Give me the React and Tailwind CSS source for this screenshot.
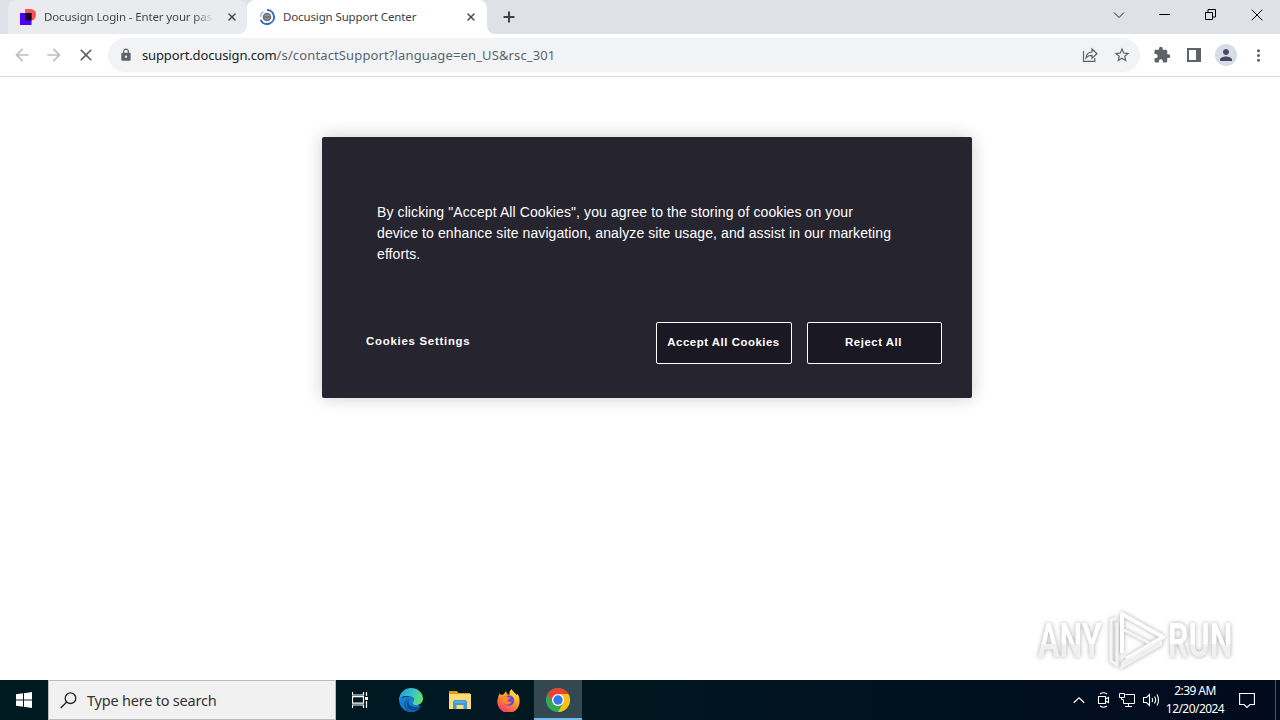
import { Plus, X } from "lucide-react";
import {
  MdArrowBack,
  MdArrowForward,
  MdClose,
  MdExtension,
  MdLock,
  MdMoreVert,
  MdPerson,
  MdStarBorder,
} from "react-icons/md";

function DocusignIcon() {
  return (
    <svg width="16" height="16" viewBox="0 0 16 16">
      <path d="M5 0h5.500A5.500 5.500 0 0 1 16 5.500c0 3.300-2 5.900-4.600 6.200H5z" fill="#ff5252" />
      <path d="M0 4h11.500v12H0z" fill="#4c00ff" />
      <path d="M5 4h6.500v7.500H5z" fill="#130020" />
    </svg>
  );
}

function LoadingIcon() {
  return (
    <svg width="16" height="16" viewBox="0 0 16 16" fill="none">
      <circle cx="8" cy="8" r="4.300" fill="#716d73" />
      <path d="M5.500 7.200 8 5.500l3 1.700M6 9l2.400 1.400 2-1.300" stroke="#c4bfc2" strokeWidth="0.800" />
      <path d="M8 1a7 7 0 1 1-6.400 9.800" stroke="#2c6bd1" strokeWidth="2" />
      <path d="M1.400 8a6.600 6.600 0 0 1 3-5.400" stroke="#9bb9e8" strokeWidth="1.300" />
    </svg>
  );
}

function TabStrip() {
  return (
    <div className="flex h-[34px] bg-[#dee1e6] pl-2">
      <div className="flex w-[239px] items-center rounded-t-lg bg-[#e9ebee] pl-3">
        <DocusignIcon />
        <span className="ml-2 w-[170px] bg-linear-to-r from-[#3c4043] from-88% to-transparent bg-clip-text text-[11.5px] tracking-[-0.13px] whitespace-nowrap text-transparent">
          Docusign Login - Enter your pas
        </span>
        <X className="ml-[12px]" size={12} strokeWidth={3} color="#45494d" />
      </div>
      <div className="relative flex w-[240px] items-center rounded-t-lg bg-white pl-3">
        <svg className="absolute bottom-0 -left-2" width="8" height="8">
          <path d="M8 0v8H0a8 8 0 0 0 8-8" fill="#fff" />
        </svg>
        <svg className="absolute -right-2 bottom-0" width="8" height="8">
          <path d="M0 0v8h8a8 8 0 0 1-8-8" fill="#fff" />
        </svg>
        <LoadingIcon />
        <span className="ml-2 w-[170px] text-[11.5px] tracking-[-0.13px] whitespace-nowrap text-[#3c4043]">
          Docusign Support Center
        </span>
        <X className="ml-[12px]" size={12} strokeWidth={3} color="#45494d" />
      </div>
      <Plus className="mt-[9px] ml-[14px]" size={16} strokeWidth={3} color="#3c4043" />
      <div className="ml-auto flex h-[29px] items-center">
        <svg className="mr-[34px]" width="12" height="12" fill="none" stroke="#222">
          <path d="m1 3.500 5 5 5-5" />
        </svg>
        <svg className="mr-[35px]" width="11" height="11" stroke="#000">
          <path d="M0 5.500h11" />
        </svg>
        <svg className="mr-[35px]" width="11" height="11" fill="none" stroke="#000">
          <path d="M.5 3.500h7v7h-7zM3 3V.5h7.500v7.500H8" />
        </svg>
        <svg className="mr-[17px]" width="12" height="12" stroke="#000">
          <path d="m.7.7 10.600 10.600m0-10.600L.7 11.300" />
        </svg>
      </div>
    </div>
  );
}

function Toolbar() {
  return (
    <div className="flex h-[43px] items-center border-b border-[#dadce0] bg-white pl-3 text-[#5f6368]">
      <MdArrowBack className="text-[#bcbec1]" size={20} />
      <MdArrowForward className="ml-3 text-[#bcbec1]" size={20} />
      <MdClose className="ml-3" size={20} />
      <div className="ml-3 flex h-[34px] w-[1032px] items-center rounded-full bg-[#f1f3f4] pl-[11px]">
        <MdLock size={14} />
        <span className="ml-[9px] pt-[2px] text-[13px] tracking-[0.13px] whitespace-nowrap">
          <span className="tracking-[-0.13px] text-[#202124]">support.docusign.com</span>
          /s/contactSupport?language=en_US&amp;rsc_301
        </span>
        <svg className="ml-auto" width="16" height="16" viewBox="0 0 16 16" fill="none" stroke="#5f6368" strokeWidth="1.200">
          <path d="M1.500 4v10.400h11.300V11M4 11c.4-4 2.500-5.800 6-6V2l5 4.700-5 4.500V8.300C7.400 8.200 5.500 9 4 11z" />
        </svg>
        <MdStarBorder className="mr-[9px] ml-[15px]" size={18} />
      </div>
      <MdExtension className="ml-[13px]" size={18} />
      <svg className="ml-4" width="14" height="14">
        <path d="M0 0h14v14H0zM2 2v10h7V2z" fill="#5f6368" fillRule="evenodd" />
      </svg>
      <div className="ml-[14px] flex size-[22px] items-center justify-center rounded-full bg-[#d9dbe5]">
        <MdPerson size={18} color="#454a62" />
      </div>
      <MdMoreVert className="ml-[12px]" size={19} />
    </div>
  );
}

function CookieDialog() {
  return (
    <div className="mt-[60px] ml-[322px] h-[261px] w-[650px] rounded-[2px] bg-[#26242e] pt-[65px] text-white shadow-[0_0_18px_rgba(0,0,0,0.2)]">
      <p className="ml-[55px] text-[14px] leading-[21px] tracking-[0.1px] whitespace-nowrap">
        By clicking "Accept All Cookies", you agree to the storing of cookies on your
        <br />
        device to enhance site navigation, analyze site usage, and assist in our marketing
        <br />
        efforts.
      </p>
      <div className="mt-[57px] flex pr-[30px] pl-[44px] text-[11.4px] font-bold tracking-[0.54px]">
        <button className="h-[40px] tracking-[0.75px] whitespace-nowrap">Cookies Settings</button>
        <button className="ml-auto h-[42px] w-[136px] rounded-[2px] border border-white bg-[#1a1822] pr-[1px] whitespace-nowrap">
          Accept All Cookies
        </button>
        <button className="ml-[15px] h-[42px] w-[135px] rounded-[2px] border border-white bg-[#1a1822] pr-[2px]">
          Reject All
        </button>
      </div>
    </div>
  );
}

function Watermark() {
  const word =
    "inline-block origin-left bg-linear-to-b from-white from-55% to-[#f0f0f0] to-56% bg-clip-text font-['Roboto'] text-[48px] leading-[60px] font-bold text-transparent";
  return (
    <div className="absolute top-[610px] left-[1038px] flex h-[62px] w-[200px] items-center">
      <div className="w-[67px] drop-shadow-[0_0_2px_#aaa]">
        <span className={`${word} scale-x-[0.67]`}>ANY</span>
      </div>
      <svg
        className="shrink-0 drop-shadow-[0_0_2px_#aaa]"
        width="62"
        height="62"
        viewBox="0 0 62 62"
        fill="none"
        stroke="#fff"
        strokeWidth="4"
        strokeLinejoin="round"
      >
        <path d="M17 43V4l41 23-37 22" />
        <path d="M11 8 6 10v41l6 4V13m5 6 35 18" stroke="#f5f5f5" strokeWidth="3" />
        <path d="m16 58 40-23v-5L18 52z" fill="#eee" stroke="#f3f3f3" strokeWidth="2" />
      </svg>
      <div className="ml-[1px] w-[66px] drop-shadow-[0_0_2px_#aaa]">
        <span className={`${word} scale-x-[0.67]`}>RUN</span>
      </div>
    </div>
  );
}

function EdgeIcon() {
  return (
    <svg width="24" height="24" viewBox="0 0 24 24">
      <defs>
        <linearGradient id="edgeTop" x1="0" y1="0.3" x2="1" y2="0.6">
          <stop offset="0" stopColor="#249fdc" />
          <stop offset="0.5" stopColor="#36c5c5" />
          <stop offset="1" stopColor="#67df6a" />
        </linearGradient>
      </defs>
      <path d="M.1 10C-.5 18 4.500 24 12 24c4 0 7.500-1.800 9.500-4.500L12 8z" fill="#1380d0" />
      <path d="M.1 11C1 4 6 0 12 0c7 0 12 5 12 10.500 0 4-3 6.500-6.500 6.500-3 0-4.500-1.400-3.500-2.600 2.500-3-.5-6.400-4.500-6.400C5 8 1.600 8.500.1 12z" fill="url(#edgeTop)" />
      <path d="M10.500 10c-4 1.500-4.500 6.500-2 9.800 2.800 3.700 7.500 4 10.500 2A12 12 0 0 1 9 23.500C5.500 21.500 4.500 18 5.500 14.500 6.300 12 8 10.500 10.500 10z" fill="#125da8" />
      <path d="M11 10.500c-2.500 2-1.700 6 1.300 7.600 3 1.600 6.700 1.200 9.500-.6.500-.3.800.2.500.7-1.800 3-5 4.400-8 4.200-4-.3-6.800-3.200-6.500-6.900.2-2.400 1.300-4.200 3.200-5z" fill="#0b4a90" />
    </svg>
  );
}

function FolderIcon() {
  return (
    <svg width="22" height="20" viewBox="0 0 22 20">
      <path d="M0 1h8l1.500 2H21v4H0z" fill="#dc9d22" />
      <path d="M0 4h22v15H0z" fill="#ffdb75" />
      <path d="M4 19v-7.500L5.500 10h11l1.500 1.500V19h-3.500v-4h-7v4z" fill="#3e99d6" />
      <path d="M6 11h10v2H6z" fill="#5aabe0" />
    </svg>
  );
}

function FirefoxIcon() {
  return (
    <svg width="23" height="23" viewBox="0 0 24 24">
      <defs>
        <linearGradient id="fox" x1="0.8" y1="0" x2="0.2" y2="1">
          <stop offset="0" stopColor="#fff04a" />
          <stop offset="0.45" stopColor="#ff9a24" />
          <stop offset="1" stopColor="#f5286f" />
        </linearGradient>
      </defs>
      <path d="M3 4.500 4 6.300l3-.8L9.500 2l1 3.500L13 6c-.3-2.500.5-4.700 2.500-6 .5 3 4 4 5.300 6.500l.2-1.500c2 2.300 2.800 5 2.500 8A11.600 11.600 0 1 1 1 9.500c.3-2 1-3.700 2-5z" fill="url(#fox)" />
      <circle cx="12.500" cy="12" r="5.600" fill="#7947d8" />
      <path d="M6 7.500c2-.8 4-.2 5.300 1.200l2.200.5c-.3 1.500-1.700 2-3 2.300.3 2 3 2.500 4.700 1.500-1 3-5 4.300-7.300 1.800C6.300 13 5.500 10 6 7.500z" fill="#ff8a26" />
      <path d="M14 5.500c3 1 5 4.500 4.500 8 2-4-.5-8.500-4.500-8z" fill="#ffd33f" />
    </svg>
  );
}

function ChromeIcon() {
  return (
    <svg width="24" height="24" viewBox="0 0 24 24">
      <circle cx="12" cy="12" r="12" fill="#34a853" />
      <path d="M12 6h10.400A12 12 0 0 1 12 24l5.200-9z" fill="#fbc116" />
      <path d="M1.600 6A12 12 0 0 1 22.400 6H12l-5.200 9z" fill="#ea4335" />
      <circle cx="12" cy="12" r="6" fill="#fff" />
      <circle cx="12" cy="12" r="4.700" fill="#3478e8" />
    </svg>
  );
}

function Taskbar() {
  return (
    <div className="flex h-10 bg-linear-to-r from-[#001a22] via-[#001720] to-[#020a1e] text-white">
      <div className="flex w-12 items-center justify-center">
        <svg width="16" height="16" fill="#fff">
          <path d="M0 2.300 7 1.300v6.200H0zM8 1.200 16 0v7.500H8zM0 8.500h7v6.200l-7-1zM8 8.500h8V16l-8-1.200z" />
        </svg>
      </div>
      <div className="flex w-72 items-center border border-[#b9bcbd] bg-[#f1f1f1] pl-[11px]">
        <svg width="17" height="17" viewBox="0 0 17 17" fill="none" stroke="#222" strokeWidth="1.300">
          <circle cx="10.500" cy="6.200" r="5.300" />
          <path d="M6.700 10 .7 16" />
        </svg>
        <span className="ml-[10px] pt-[2px] text-[14.5px] tracking-[-0.21px] whitespace-nowrap text-[#333]">
          Type here to search
        </span>
      </div>
      <div className="flex w-12 items-center justify-center">
        <svg width="17" height="16" fill="none" stroke="#fff" strokeWidth="1.200">
          <path d="M.5 0v3h11V0M.5 16v-3h11v3M.5 4.700h11v6.500H.5zM14.500 0v4M14.500 9v7" />
          <path d="M13 5h3v3h-3z" fill="#fff" stroke="none" />
        </svg>
      </div>
      <div className="ml-[3px] flex w-12 items-center justify-center">
        <EdgeIcon />
      </div>
      <div className="flex w-[50px] items-center justify-center">
        <FolderIcon />
      </div>
      <div className="flex w-[49px] items-center justify-center pr-[2px]">
        <FirefoxIcon />
      </div>
      <div className="flex w-12 items-center justify-center border-b-2 border-[#76b9ed] bg-[#334850] pt-[2px]">
        <ChromeIcon />
      </div>
      <div className="ml-auto flex items-center">
        <svg width="12" height="8" fill="none" stroke="#fff" strokeWidth="1.200">
          <path d="m.7 6.700 5.300-5 5.300 5" />
        </svg>
        <svg className="ml-[12px]" width="13" height="16" fill="none" stroke="#fff" strokeWidth="1.100">
          <path d="M3 2q3.500-2.500 7 0M3 14q3.500 2.500 7 0M1.500 4.500h7v7h-7zM8.500 7l3-1.500v5l-3-1.500" />
        </svg>
        <svg className="ml-[9px]" width="17" height="16" fill="none" stroke="#fff">
          <path d="M6.500 2.500h9v9h-11V8M6 14.500h7M9.500 12v2.500M.5 1.500h5v4h-5zM2.500 5.500v2h2" />
        </svg>
        <svg className="ml-[7px]" width="17" height="14" fill="none" stroke="#fff" strokeWidth="1.100">
          <path d="M.5 4.500h3l3-3v11l-3-3h-3zM9 5q1.200 2 0 4M11.500 3.500q2.200 3.500 0 7M14 1.500q3 5.500 0 11" />
        </svg>
        <div className="ml-[4px] w-[62px] text-center text-[12px] leading-[18px] tracking-[-0.55px] whitespace-nowrap">
          <div>2:39 AM</div>
          <div>12/20/2024</div>
        </div>
        <svg className="mr-[20px] ml-[13px]" width="16" height="17" fill="none" stroke="#fff" strokeWidth="1.100">
          <path d="M.6 1.500h14.800v11H11l-3 3-3-3H.6z" />
        </svg>
        <div className="mr-1 h-10 w-px bg-[#4b5362]" />
      </div>
    </div>
  );
}

export default function App() {
  return (
    <div className="relative flex h-[720px] w-[1280px] flex-col overflow-hidden bg-white font-['Noto_Sans',sans-serif]">
      <TabStrip />
      <Toolbar />
      <main className="flex-1 font-['Liberation_Sans',sans-serif]">
        <CookieDialog />
      </main>
      <Watermark />
      <Taskbar />
    </div>
  );
}
